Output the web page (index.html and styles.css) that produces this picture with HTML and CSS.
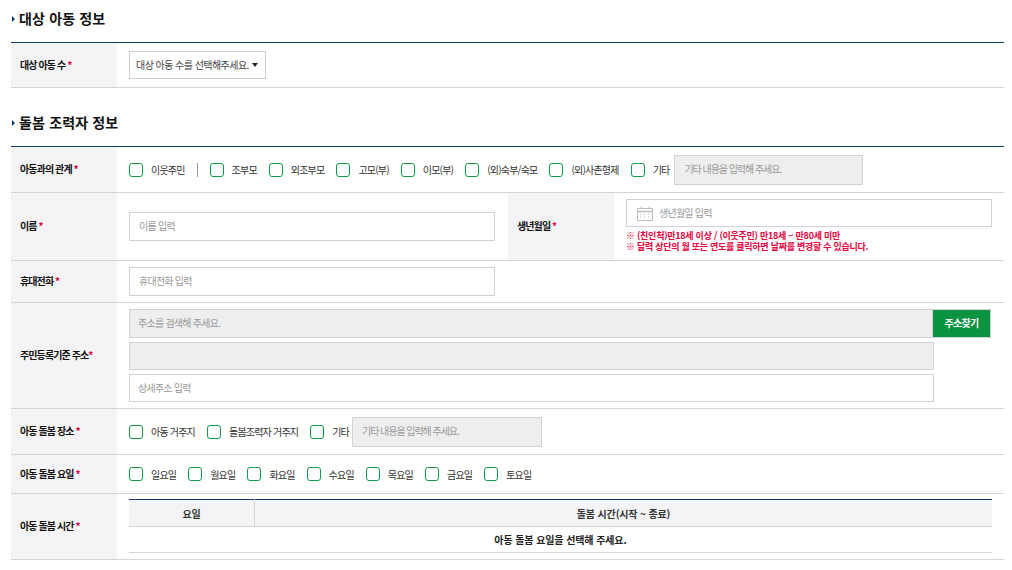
FILE: index.html
```html
<!DOCTYPE html>
<html lang="ko">
<head>
  <meta charset="UTF-8" />
  <title>돌봄 조력자 정보</title>
  <link rel="stylesheet" href="styles.css">
</head>
<body>
  <h2 class="sec-title first">대상 아동 정보</h2>
  <table class="form-table">
    <colgroup><col class="col-head"><col></colgroup>
    <tr class="row-count">
      <th>대상 아동 수 <em>*</em></th>
      <td>
        <div class="select-wrap">
          <select class="count-select">
            <option>대상 아동 수를 선택해주세요.</option>
          </select>
        </div>
      </td>
    </tr>
  </table>

  <h2 class="sec-title">돌봄 조력자 정보</h2>
  <table class="form-table">
    <colgroup><col class="col-head"><col class="col-name"><col class="col-head"><col></colgroup>
    <tr class="row-rel">
      <th>아동과의 관계 <em>*</em></th>
      <td colspan="3">
        <div class="checks">
          <label class="check"><input type="checkbox">이웃주민</label>
          <span class="check-sep"></span>
          <label class="check"><input type="checkbox">조부모</label>
          <label class="check"><input type="checkbox">외조부모</label>
          <label class="check"><input type="checkbox">고모(부)</label>
          <label class="check"><input type="checkbox">이모(부)</label>
          <label class="check"><input type="checkbox">(외)숙부/숙모</label>
          <label class="check"><input type="checkbox">(외)사촌형제</label>
          <label class="check"><input type="checkbox">기타</label>
          <input class="txt etc etc-rel" type="text" placeholder="기타 내용을 입력해 주세요." disabled>
        </div>
      </td>
    </tr>
    <tr class="row-name">
      <th>이름 <em>*</em></th>
      <td class="cell-name"><input class="txt half" type="text" placeholder="이름 입력"></td>
      <th>생년월일 <em>*</em></th>
      <td class="cell-birth">
        <div class="date-box">
          <svg class="cal" width="16" height="15" viewBox="0 0 16 15" fill="none" stroke="#bdbdbd">
            <path d="M.5 2.5h15v12H.5z"/>
            <path d="M.5 5.5h15" stroke-width="1.5"/>
            <path d="M4 .5v2M12 .5v2"/>
            <path d="M3 8h2M7 8h2M11 8h2M3 11h2M7 11h2M11 11h2" stroke-dasharray="1 1"/>
          </svg>
          <input type="text" placeholder="생년월일 입력">
        </div>
        <p class="note">※ (친인척)만18세 이상 / (이웃주민) 만18세 ~ 만80세 미만</p>
        <p class="note">※ 달력 상단의 월 또는 연도를 클릭하면 날짜를 변경할 수 있습니다.</p>
      </td>
    </tr>
    <tr class="row-phone">
      <th>휴대전화 <em>*</em></th>
      <td colspan="3"><input class="txt half" type="text" placeholder="휴대전화 입력"></td>
    </tr>
    <tr class="row-addr">
      <th>주민등록기준 주소<em>*</em></th>
      <td colspan="3">
        <div class="addr">
          <div class="addr-search">
            <input class="txt grow" type="text" placeholder="주소를 검색해 주세요." disabled>
            <button class="btn-addr" type="button">주소찾기</button>
          </div>
          <input class="txt addr-line" type="text" disabled>
          <input class="txt addr-line" type="text" placeholder="상세주소 입력">
        </div>
      </td>
    </tr>
    <tr class="row-place">
      <th>아동 돌봄 장소 <em>*</em></th>
      <td colspan="3">
        <div class="checks">
          <label class="check"><input type="checkbox">아동 거주지</label>
          <label class="check"><input type="checkbox">돌봄조력자 거주지</label>
          <label class="check"><input type="checkbox">기타</label>
          <input class="txt etc etc-place" type="text" placeholder="기타 내용을 입력해 주세요." disabled>
        </div>
      </td>
    </tr>
    <tr class="row-days">
      <th>아동 돌봄 요일 <em>*</em></th>
      <td colspan="3">
        <div class="checks">
          <label class="check"><input type="checkbox">일요일</label>
          <label class="check"><input type="checkbox">월요일</label>
          <label class="check"><input type="checkbox">화요일</label>
          <label class="check"><input type="checkbox">수요일</label>
          <label class="check"><input type="checkbox">목요일</label>
          <label class="check"><input type="checkbox">금요일</label>
          <label class="check"><input type="checkbox">토요일</label>
        </div>
      </td>
    </tr>
    <tr class="row-time">
      <th>아동 돌봄 시간 <em>*</em></th>
      <td class="cell-time" colspan="3">
        <table class="time-table">
          <tr>
            <th class="col-day">요일</th>
            <th>돌봄 시간(시작 ~ 종료)</th>
          </tr>
          <tr>
            <td colspan="2">아동 돌봄 요일을 선택해 주세요.</td>
          </tr>
        </table>
      </td>
    </tr>
  </table>
</body>
</html>
```

FILE: styles.css
```css
html, body {
  margin: 0;
  padding: 0;
  background-color: #fff;
}
body {
  padding: 0 8px 0 11px;
  font-family: "Noto Sans CJK KR", "Noto Sans", sans-serif;
  font-size: 10px;
  color: #333;
}
.sec-title {
  position: relative;
  margin: 0;
  padding: 23px 0 13px 8px;
  height: 22px;
  line-height: 22px;
  font-size: 14px;
  font-weight: 700;
  letter-spacing: 0.15px;
  color: #111;
}
.sec-title.first {
  padding-top: 7px;
  padding-bottom: 13px;
}
.sec-title::before {
  content: "";
  position: absolute;
  left: 1px;
  bottom: 20px;
  border-left: 3px solid #0b3c74;
  border-top: 3px solid transparent;
  border-bottom: 3px solid transparent;
}
.form-table {
  width: 993px;
  table-layout: fixed;
  border-collapse: collapse;
  border-top: 1px solid #0b3c74;
}
.col-head { width: 106px; }
.col-name { width: 391px; }
.form-table > tbody > tr > th {
  padding: 0 0 2px 9px;
  box-sizing: border-box;
  background-color: #f4f4f6;
  border-bottom: 1px solid #d5d5d5;
  text-align: left;
  font-size: 10px;
  font-weight: 700;
  letter-spacing: -0.9px;
  color: #111;
}
.form-table > tbody > tr > td {
  padding: 0 12px;
  border-bottom: 1px solid #d5d5d5;
}
.form-table > tbody > tr > td.cell-time {
  padding-top: 5px;
  padding-bottom: 6px;
  vertical-align: top;
}
.form-table em {
  font-style: normal;
  color: #e6003c;
}
.row-count { height: 45px; }
.row-rel { height: 46px; }
.row-name { height: 68px; }
.row-phone { height: 42px; }
.row-addr { height: 106px; }
.row-place { height: 46px; }
.row-days { height: 39px; }
.row-time { height: 66px; }

.select-wrap {
  position: relative;
  width: 137px;
}
.select-wrap::after {
  content: "";
  position: absolute;
  left: 123px;
  top: 12px;
  border-top: 4px solid #222;
  border-left: 3.5px solid transparent;
  border-right: 3.5px solid transparent;
}
.count-select {
  appearance: none;
  display: block;
  width: 137px;
  height: 28px;
  padding: 0 0 2px 6px;
  border: 1px solid #ccc;
  border-radius: 0;
  background-color: #fff;
  font-family: inherit;
  font-size: 10px;
  letter-spacing: -0.55px;
  color: #444;
}

.checks {
  display: flex;
  align-items: center;
  gap: 12px;
}
.check {
  display: flex;
  align-items: center;
  gap: 8px;
  font-size: 10px;
  letter-spacing: -0.8px;
  color: #333;
}
.check input {
  appearance: none;
  flex: none;
  width: 14px;
  height: 14px;
  margin: 0;
  border: 1px solid #0f9d48;
  border-radius: 3px;
  background-color: #fff;
}
.check-sep {
  width: 1px;
  height: 14px;
  background-color: #999;
}

.txt {
  display: block;
  box-sizing: border-box;
  height: 29px;
  margin: 0;
  padding: 0 9px 2px;
  border: 1px solid #d2d2d2;
  border-radius: 0;
  background-color: #fff;
  font-family: inherit;
  font-size: 10px;
  letter-spacing: -0.75px;
  color: #333;
}
.txt:disabled {
  background-color: #eee;
}
input::placeholder {
  color: #999;
  opacity: 1;
}
.half { width: 366px; }
.etc {
  height: 30px;
  letter-spacing: -1.05px;
}
.etc-rel { width: 189px; margin-left: -7px; }
.etc-place { width: 190px; margin-left: -9px; }

.cell-birth { vertical-align: top; }
.date-box {
  display: flex;
  align-items: center;
  gap: 6px;
  box-sizing: border-box;
  width: 366px;
  height: 28px;
  margin-top: 6px;
  padding: 0 10px;
  border: 1px solid #d2d2d2;
}
.date-box input {
  flex: 1;
  min-width: 0;
  border: 0;
  padding: 0 0 2px;
  outline: 0;
  font-family: inherit;
  font-size: 10px;
  letter-spacing: -0.75px;
}
.cal { flex: none; }
.note {
  margin: 0;
  line-height: 11px;
  font-size: 9px;
  font-weight: 700;
  letter-spacing: -0.27px;
  color: #e6003c;
}
.date-box + .note { margin-top: 3px; }

.addr {
  display: flex;
  flex-direction: column;
  gap: 4px;
}
.addr .txt { padding-left: 8px; }
.addr-search {
  display: flex;
  width: 862px;
}
.grow {
  flex: 1;
  min-width: 0;
}
.btn-addr {
  flex: none;
  width: 58px;
  height: 29px;
  padding: 0 0 2px;
  border: 1px solid #d2d2d2;
  border-left: 0;
  background-color: #0a9340;
  font-family: inherit;
  font-size: 10px;
  font-weight: 700;
  letter-spacing: -0.7px;
  color: #fff;
}
.addr-line {
  width: 805px;
  height: 28px;
}

.time-table {
  width: 863px;
  table-layout: fixed;
  border-collapse: collapse;
  border-top: 1px solid #0b3c74;
}
.time-table th {
  height: 26px;
  padding: 0;
  background-color: #f4f4f6;
  border-bottom: 1px solid #d5d5d5;
  font-size: 10px;
  font-weight: 700;
  letter-spacing: -0.15px;
  color: #333;
}
.time-table .col-day {
  width: 125px;
  border-right: 1px solid #d5d5d5;
}
.time-table td {
  height: 25px;
  padding: 0;
  border-bottom: 1px solid #d5d5d5;
  text-align: center;
  font-size: 10px;
  font-weight: 700;
  letter-spacing: -0.1px;
  color: #222;
}
```
